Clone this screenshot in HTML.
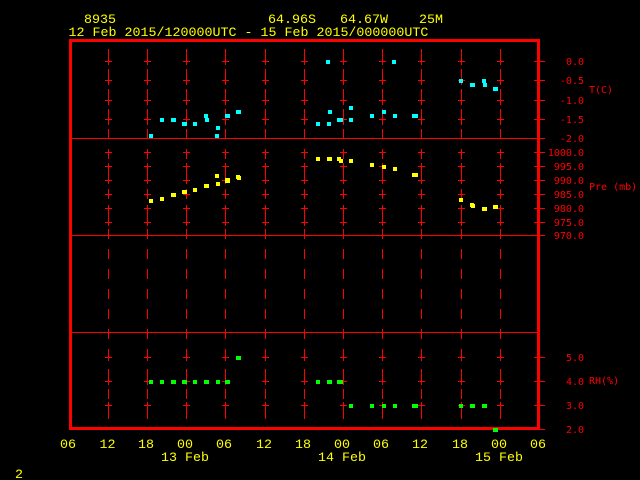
<!DOCTYPE html>
<html>
<head>
<meta charset="utf-8">
<title>8935</title>
<style>
html,body{margin:0;padding:0;background:#000;width:640px;height:480px;overflow:hidden}
svg{display:block}
text{font-family:"Liberation Mono","DejaVu Sans Mono",monospace;white-space:pre}
.y{fill:#ff0;font-size:13.33px}
.r{fill:#f00;font-size:10px;font-family:"DejaVu Sans Mono","Liberation Mono",monospace}
.e{text-anchor:end}
.m{text-anchor:middle}
</style>
</head>
<body>
<svg width="640" height="480" viewBox="0 0 640 480" xmlns="http://www.w3.org/2000/svg">
<rect width="640" height="480" fill="#000"/>
<defs>
<g id="c" shape-rendering="crispEdges">
<path fill="none" stroke="#f00" stroke-width="1" d="M.5 49V65M.5 69V85M.5 89V105M.5 109V125M.5 129V139M.5 149V159M.5 163V184M.5 189V199M.5 205V226M.5 229V239M.5 249V259M.5 269V279M.5 289V299M.5 309V319M.5 329V339M.5 349V361M.5 369V385M.5 389V399M.5 402V419M-3 61.5h7M-3 80.5h7M-3 100.5h7M-3 119.5h7M-3 152.5h7M-3 166.5h7M-3 180.5h7M-3 194.5h7M-3 208.5h7M-3 222.5h7M-3 357.5h7M-3 381.5h7M-3 405.5h7"/>
</g>
</defs>
<use href="#c" x="108"/><use href="#c" x="147"/><use href="#c" x="186"/><use href="#c" x="225"/><use href="#c" x="265"/><use href="#c" x="304"/><use href="#c" x="343"/><use href="#c" x="382"/><use href="#c" x="421"/><use href="#c" x="461"/><use href="#c" x="500"/>
<g shape-rendering="crispEdges">
<path fill="none" stroke="#f00" stroke-width="1" d="M72 138.5H545M72 235.5H545M72 332.5H538M534 61.5H545M534 80.5H545M534 100.5H545M534 119.5H545M534 152.5H545M534 166.5H545M534 180.5H545M534 194.5H545M534 208.5H545M534 222.5H545M534 357.5H545M534 381.5H545M534 405.5H545M538 429.5H545"/>
<path fill="#f00" d="M69 39H540V430H69ZM72 42V427H537V42Z" fill-rule="evenodd"/>
<path fill="#0ff" d="M149 134h4v4h-4zM160 118h4v4h-4zM171 118h5v4h-5zM182 122h5v4h-5zM193 122h4v4h-4zM204 114h4v4h-4zM205 118h4v4h-4zM216 126h4v4h-4zM215 134h4v4h-4zM225 114h5v4h-5zM236 110h5v4h-5zM316 122h4v4h-4zM326 60h4v4h-4zM328 110h4v4h-4zM327 122h4v4h-4zM337 118h6v4h-6zM349 106h4v4h-4zM349 118h4v4h-4zM370 114h4v4h-4zM382 110h4v4h-4zM393 114h4v4h-4zM412 114h6v4h-6zM392 60h4v4h-4zM459 79h4v4h-4zM470 83h5v4h-5zM482 79h4v4h-4zM483 83h4v4h-4zM493 87h5v4h-5z"/>
<path fill="#ff0" d="M149 199h4v4h-4zM160 197h4v4h-4zM171 193h5v4h-5zM182 190h5v4h-5zM193 188h4v4h-4zM204 184h5v4h-5zM216 182h4v4h-4zM215 174h4v4h-4zM225 178h5v5h-5zM236 175h4v4h-4zM237 176h4v4h-4zM316 157h4v4h-4zM327 157h5v4h-5zM337 157h4v4h-4zM339 159h4v4h-4zM349 159h4v4h-4zM370 163h4v4h-4zM382 165h4v4h-4zM393 167h4v4h-4zM412 173h6v4h-6zM459 198h4v4h-4zM470 203h4v4h-4zM471 204h4v4h-4zM482 207h5v4h-5zM493 205h5v4h-5z"/>
<path fill="#0f0" d="M149 380h4v4h-4zM160 380h4v4h-4zM171 380h5v4h-5zM182 380h5v4h-5zM193 380h4v4h-4zM204 380h5v4h-5zM216 380h4v4h-4zM225 380h5v4h-5zM236 356h5v4h-5zM316 380h4v4h-4zM327 380h5v4h-5zM337 380h6v4h-6zM349 404h4v4h-4zM370 404h4v4h-4zM382 404h4v4h-4zM393 404h4v4h-4zM412 404h6v4h-6zM459 404h4v4h-4zM470 404h5v4h-5zM482 404h5v4h-5zM493 428h5v4h-5z"/>
</g>
<text class="y" x="84" y="23">8935</text>
<text class="y" x="268" y="23">64.96S</text>
<text class="y" x="340" y="23">64.67W</text>
<text class="y" x="419" y="23">25M</text>
<text class="y" x="68.5" y="36">12 Feb 2015/120000UTC - 15 Feb 2015/000000UTC</text>
<text class="r e" x="584" y="65">0.0</text>
<text class="r e" x="584" y="84">-0.5</text>
<text class="r e" x="584" y="104">-1.0</text>
<text class="r e" x="584" y="123">-1.5</text>
<text class="r e" x="584" y="142">-2.0</text>
<text class="r e" x="584" y="156">1000.0</text>
<text class="r e" x="584" y="170">995.0</text>
<text class="r e" x="584" y="184">990.0</text>
<text class="r e" x="584" y="198">985.0</text>
<text class="r e" x="584" y="212">980.0</text>
<text class="r e" x="584" y="226">975.0</text>
<text class="r e" x="584" y="239">970.0</text>
<text class="r e" x="584" y="361">5.0</text>
<text class="r e" x="584" y="385">4.0</text>
<text class="r e" x="584" y="409">3.0</text>
<text class="r e" x="584" y="433">2.0</text>
<text class="r" x="589" y="93">T(C)</text>
<text class="r" x="589" y="190">Pre (mb)</text>
<text class="r" x="589" y="384">RH(%)</text>
<text class="y m" x="68" y="448">06</text>
<text class="y m" x="107.5" y="448">12</text>
<text class="y m" x="146" y="448">18</text>
<text class="y m" x="185" y="448">00</text>
<text class="y m" x="224" y="448">06</text>
<text class="y m" x="264" y="448">12</text>
<text class="y m" x="303" y="448">18</text>
<text class="y m" x="342" y="448">00</text>
<text class="y m" x="381" y="448">06</text>
<text class="y m" x="420" y="448">12</text>
<text class="y m" x="460" y="448">18</text>
<text class="y m" x="499" y="448">00</text>
<text class="y m" x="538" y="448">06</text>
<text class="y" x="161" y="461">13 Feb</text>
<text class="y" x="318" y="461">14 Feb</text>
<text class="y" x="475" y="461">15 Feb</text>
<text class="y" x="15" y="478">2</text>
</svg>
</body>
</html>
